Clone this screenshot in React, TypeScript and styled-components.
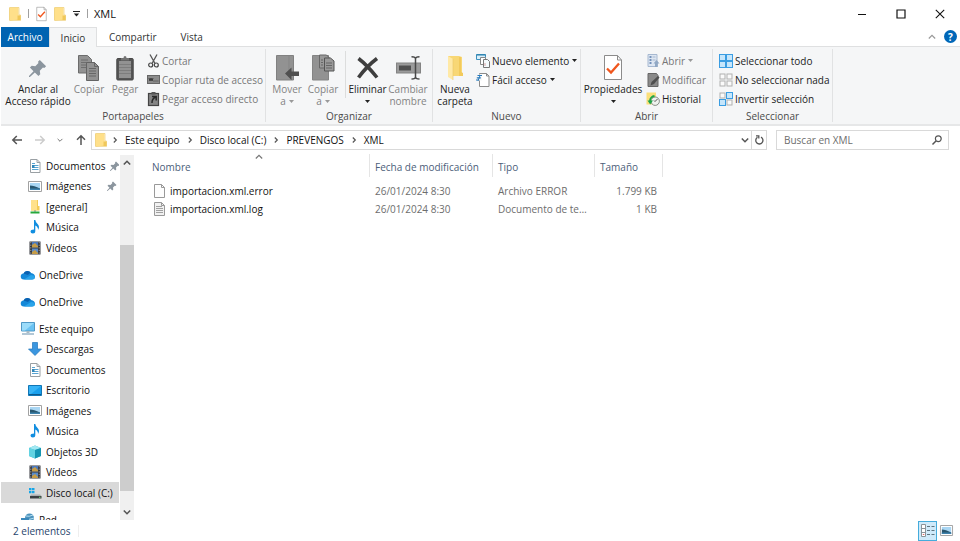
import React from "react";
import styled, { createGlobalStyle } from "styled-components";

const GlobalStyle = createGlobalStyle`
  * { box-sizing: border-box; }
  body { margin: 0; background: #fff; }
  body, button, input { font-family: "Open Sans", "Noto Sans", sans-serif; font-size: 10px; line-height: 12px; color: #222; }
  button { border: 0; background: none; padding: 0; white-space: nowrap; }
  svg { display: block; flex: none; overflow: visible; }
`;

/* ---------- icons ---------- */

const Folder = ({ w = 12, h = 14 }: { w?: number; h?: number }) => (
  <svg width={w} height={h} viewBox="0 0 12 14">
    <path d="M.5 1h8.500v7.500h2.500V13H.5z" fill="#f6d26b" />
    <path d="M1 .5h8.500v12L1 13.500z" fill="#ffe08a" />
    <path d="M8.500 8.500h3V13h-3z" fill="#f0c85a" />
    <path d="M.5.500h9.500v7.500h1.500v5.500H.5z" fill="none" stroke="#ecc763" strokeWidth=".6" />
  </svg>
);

const BigFolder = () => (
  <svg width="16" height="25" viewBox="0 0 16 25">
    <path d="M1 1h11l3 1v19H1z" fill="#f8d775" />
    <path d="M12 2h2v15l2 1v3h-4z" fill="#f2ca5c" />
    <path d="M1 1l5 3v21l-5-3z" fill="#ffe9a6" />
    <path d="M6 4v21" stroke="#e9c666" strokeWidth=".6" />
  </svg>
);

const CheckDoc = ({ w = 11, h = 14 }: { w?: number; h?: number }) => (
  <svg width={w} height={h} viewBox="0 0 18 25">
    <path d="M.5.5h13l4 4.500v19.500H.5z" fill="#fff" stroke="#8b8b8b" />
    <path d="M13.500.5V5h4" fill="none" stroke="#8b8b8b" />
    <path d="M3 13.500l4 4 8-9" fill="none" stroke="#f0561d" strokeWidth="2.300" />
  </svg>
);

const Pin = ({ size = 10 }: { size?: number }) => (
  <svg width={size} height={size} viewBox="0 0 20 20">
    <path d="M12 1l7 7-2 2-1.500-.5-3.500 3.500.5 4-2 2-4-4L1 20l-1 0 0-1 5-5.500L1 9.500l2-2 4 .5L10.500 4.500 10 3z" fill="#8b959e" />
  </svg>
);

const CopyBig = () => (
  <svg width="22" height="26" viewBox="0 0 22 26">
    <path d="M.5.5h9l4 4V18H.5z" fill="#929292" stroke="#6c6c6c" />
    <path d="M3 5h7M3 7.500h8M3 10h8M3 12.500h5" stroke="#646464" strokeWidth=".8" />
    <path d="M8.500 7.500h8l4 4v14h-12z" fill="#929292" stroke="#646464" />
    <path d="M16.500 7.500v4h4M11 13.500h7M11 16h7M11 18.500h7M11 21h7" fill="none" stroke="#5c5c5c" strokeWidth=".8" />
  </svg>
);

const PasteBig = () => (
  <svg width="18" height="26" viewBox="0 0 18 26">
    <rect x=".8" y="3.500" width="16.400" height="21.500" rx="1" fill="#555" stroke="#484848" />
    <path d="M3 6h12v17H3z" fill="#929292" />
    <path d="M5 5.500V3h2.500a1.500 2 0 0 1 3 0H13v2.500z" fill="#737373" />
    <path d="M3 9.500h12M3 12.500h12M3 15.500h12M3 18.500h12" stroke="#777" strokeWidth=".8" />
  </svg>
);

const Scissors = () => (
  <svg width="11" height="14" viewBox="0 0 11 14">
    <path d="M2 .5l5 9M9 .5l-5 9" stroke="#555" strokeWidth="1.300" />
    <circle cx="2.700" cy="11" r="2" fill="none" stroke="#444" strokeWidth="1.200" />
    <circle cx="8.300" cy="11" r="2" fill="none" stroke="#444" strokeWidth="1.200" />
  </svg>
);

const PathIcon = () => (
  <svg width="13" height="9" viewBox="0 0 13 9">
    <rect x=".5" y=".5" width="12" height="8" fill="#8b8b8b" stroke="#666" />
    <path d="M2 3l1 3 1-3 1 3 1-3M6.500 6h1M8.500 6h1M10.500 6h.8" stroke="#333" strokeWidth=".9" fill="none" />
  </svg>
);

const PasteLink = () => (
  <svg width="11" height="14" viewBox="0 0 11 14">
    <rect x=".5" y="1.500" width="10" height="12" fill="#858585" stroke="#444" strokeWidth="1.200" />
    <path d="M3.500 0h4v2.500h-4z" fill="#555" />
    <path d="M4 4.500h4.200v4M8 4.700Q3.800 6.500 4 11" fill="none" stroke="#292929" strokeWidth="1.500" />
  </svg>
);

const MoveBig = () => (
  <svg width="23" height="26" viewBox="0 0 23 26">
    <path d="M.5.500h17V25H.5z" fill="#929292" stroke="#818181" />
    <path d="M13 1v15" stroke="#858585" />
    <path d="M9 18.500l6.500-6v4H23V21h-7.500v4z" fill="#505050" />
  </svg>
);

const CopyToBig = () => (
  <svg width="23" height="27" viewBox="0 0 23 27">
    <path d="M.5 1.500h16V26H.5z" fill="#929292" stroke="#848484" />
    <path d="M7.500 1h7l3 3v10h-10z" fill="#999" stroke="#666" />
    <path d="M12.500 4h6l3.500 3v10h-9.500z" fill="#999" stroke="#555" />
    <path d="M14 9h6M14 11.500h6M14 14h6M9 6h2M9 8.500h2M9 11h2" stroke="#606060" strokeWidth=".9" />
  </svg>
);

const DeleteBig = () => (
  <svg width="22" height="22" viewBox="0 0 22 22">
    <path d="M1.500 1.500Q10 8 20 20.500M20 1.500Q10 9 1.500 20.500" fill="none" stroke="#3e3e3e" strokeWidth="3.600" />
  </svg>
);

const RenameBig = () => (
  <svg width="25" height="24" viewBox="0 0 25 24">
    <rect x=".5" y="7" width="24" height="10" fill="#9b9b9b" stroke="#838383" />
    <path d="M3 9.500h12v5H3z" fill="#505050" />
    <path d="M15.500.8Q19.500.8 19.500 3v18q0 2-4 2M23.500.8Q19.500.8 19.500 3v18q0 2 4 2" fill="none" stroke="#484848" strokeWidth="1.500" />
  </svg>
);

const NewItem = () => (
  <svg width="14" height="14" viewBox="0 0 14 14">
    <path d="M.5.5h9v5h-9z" fill="#d9f0fb" stroke="#3c91be" />
    <path d="M.5 1h9" stroke="#277aa8" />
    <path d="M4.500 3.500h5v7h-5z" fill="#fff" stroke="#888" />
    <path d="M7.500 5.500h4l2 2v6h-6z" fill="#f4fafd" stroke="#777" />
    <path d="M9 9v3" stroke="#d7a3a3" />
  </svg>
);

const EasyAccess = () => (
  <svg width="14" height="14" viewBox="0 0 14 14">
    <path d="M3.500.5h7l2.500 2.500v10.500H3.500z" fill="#fff" stroke="#8b8b8b" />
    <path d="M10.500.5V3H13" fill="none" stroke="#8b8b8b" />
    <path d="M0 1.500h6v6H0z" fill="#f5f6f7" />
    <path d="M1.500 2.500h4.500M.8 4.800h4M0 7h2.500" stroke="#2779ba" strokeWidth="1.200" />
    <path d="M4 2.500L2 8" stroke="#2779ba" strokeWidth="1" />
  </svg>
);

const OpenIcon = () => (
  <svg width="13" height="14" viewBox="0 0 13 14">
    <path d="M1 .5h9v12H1z" fill="#dde6f2" stroke="#a6b8d0" />
    <path d="M2.500 3h2M2.500 6h2M2.500 9h2" stroke="#5277a8" strokeWidth="1.300" />
    <path d="M5.500 3h3M5.500 6h3" stroke="#a5b7ce" />
    <path d="M9.500 6l3 3.500h-1.700V13H8V9.500H6.500z" fill="#91a8c4" />
  </svg>
);

const EditIcon = () => (
  <svg width="13" height="14" viewBox="0 0 13 14">
    <path d="M1 .5h8.500l1.500 2v11H1z" fill="#8a8a8a" stroke="#666" />
    <path d="M3.500 12.500l1-3.500L11 3l1.500 1.500L7 11z" fill="#4f4f4f" />
  </svg>
);

const HistoryIcon = () => (
  <svg width="14" height="14" viewBox="0 0 14 14">
    <path d="M.5.5h9.500v12H.5z" fill="#fbdf7a" />
    <circle cx="9.200" cy="9.200" r="4.200" fill="#eef2ee" stroke="#838b84" />
    <path d="M4 9a5 5 0 0 1 4.500-5" fill="none" stroke="#1ea548" strokeWidth="1.800" />
    <path d="M1.500 8.500h5.500L4.200 12.500z" fill="#1ea548" />
    <path d="M11.500 7L9 9.500 8 8.500" stroke="#555" fill="none" />
  </svg>
);

const Squares = ({ on }: { on: boolean[] }) => (
  <svg width="14" height="14" viewBox="0 0 14 14">
    {on.map((sel, i) => (
      <rect
        key={i}
        x={(i % 2) * 7 + (sel ? 0.5 : 1)}
        y={Math.floor(i / 2) * 7 + (sel ? 0.5 : 1)}
        width={sel ? 6 : 5}
        height={sel ? 6 : 5}
        fill={sel ? "#c6e6fb" : "#fafafa"}
        stroke={sel ? "#3a9de2" : "#b0b0b0"}
      />
    ))}
  </svg>
);

const Chevron = ({ d, w = 8, color = "#555", sw = 1.2 }: { d: "up" | "down" | "right"; w?: number; color?: string; sw?: number }) => (
  <svg width={w} height={w} viewBox="0 0 8 8">
    <path
      d={d === "up" ? "M.8 5.500L4 2.300l3.200 3.200" : d === "down" ? "M.8 2.500L4 5.700l3.200-3.200" : "M2.800 1.500L5.300 4 2.800 6.500"}
      fill="none" stroke={color} strokeWidth={sw}
    />
  </svg>
);

const Triangle = ({ color = "#222" }: { color?: string }) => (
  <svg width="5" height="3" viewBox="0 0 5 3"><path d="M0 0h5L2.500 3z" fill={color} /></svg>
);

const Arrow = ({ dir, color }: { dir: number; color: string }) => (
  <svg width="10" height="10" viewBox="0 0 10 10">
    <path transform={`rotate(${dir} 5 5)`} d="M10 5H1M4.800 1L.8 5l4 4" fill="none" stroke={color} strokeWidth="1.500" />
  </svg>
);

const DocIcon = () => (
  <svg width="14" height="14" viewBox="0 0 14 14">
    <path d="M2.500.5H9l3 3v10H2.500z" fill="#fff" stroke="#9aa0a4" />
    <path d="M9 .5v3h3" fill="none" stroke="#9aa0a4" />
    <path d="M4 4.500h3M4 6.500h6.500M4 8.500h6.500M4 10.500h6.500" stroke="#5aa5d2" />
    <path d="M4 6h2.500v3H4z" fill="#2f85b8" />
  </svg>
);

const ImageIcon = ({ w = 14 }: { w?: number }) => (
  <svg width={w} height="11" viewBox="0 0 14 11" preserveAspectRatio="none">
    <path d="M.5.5h13v10H.5z" fill="#fff" stroke="#a2a2a2" />
    <path d="M2 2h10v7H2z" fill="#a9d6f3" />
    <path d="M2 4.500q4 0 10 3V9H2z" fill="#28566f" />
    <path d="M2 7.500h10V9H2z" fill="#3d82ad" />
  </svg>
);

const NetFolder = () => (
  <svg width="14" height="15" viewBox="0 0 14 15">
    <path d="M3 1h7v6h1.500v4.500H3z" fill="#f3cb56" />
    <path d="M3 1h6v10.500H3z" fill="#ffe18b" />
    <path d="M7 11v2" stroke="#888" />
    <path d="M2.500 13.500h9" stroke="#27a83a" strokeWidth="2" />
  </svg>
);

const MusicIcon = () => (
  <svg width="14" height="14" viewBox="0 0 14 14">
    <path d="M6 0h1.300Q7.500 2.500 10 4.500q2 2.500 0 5.500 .3-3-2.700-4.500V11q0 2.500-2.500 2.500Q2.500 13.500 2.500 11.500T6 9.500z" fill="#118ee0" />
  </svg>
);

const VideoIcon = () => (
  <svg width="14" height="14" viewBox="0 0 14 14">
    <path d="M1.500.5h11v13h-11z" fill="#34373c" />
    <path d="M4 1h6v5.500H4z" fill="#4b79bd" />
    <path d="M4 7.500h6V13H4z" fill="#5b8cc9" />
    <path d="M4 4l3-2 3 3v1.500H4zM4 11l3-2 3 3v1H4z" fill="#c69c46" />
    <path d="M2.800 1v12M11.200 1v12" stroke="#bdbdbd" strokeWidth=".8" strokeDasharray="1.300 1.300" />
  </svg>
);

const CloudIcon = () => (
  <svg width="14" height="10" viewBox="0 0 14 10">
    <path d="M3 9.500a3 3 0 0 1-.5-6A4.300 4.300 0 0 1 10 3q3.800.5 4 3.500 0 3-3 3z" fill="#1488d8" />
    <path d="M2.500 3.500A4.300 4.300 0 0 1 10 3q-2 0-3 2z" fill="#0b61b0" />
    <path d="M3 9.500L10 5q3 0 4 2-.2 2.500-3 2.500z" fill="#29a4ea" />
  </svg>
);

const ComputerIcon = () => (
  <svg width="14" height="13" viewBox="0 0 14 13">
    <path d="M.5.5h13v8.500H.5z" fill="#6bc3f3" stroke="#5099c7" />
    <path d="M1 1h12L4 8.500H1z" fill="#9bdcfa" />
    <path d="M7 9v2" stroke="#a9bac5" strokeWidth="3" />
    <path d="M1 12h12" stroke="#7fa2bb" strokeWidth="1.200" />
  </svg>
);

const DownloadIcon = () => (
  <svg width="14" height="14" viewBox="0 0 14 14">
    <path d="M4.500.5h5V7h4L7 13.500.5 7h4z" fill="#3b96df" stroke="#2177bd" strokeWidth=".7" />
  </svg>
);

const DesktopIcon = () => (
  <svg width="14" height="11" viewBox="0 0 14 11">
    <path d="M.5.500h13v10H.5z" fill="#19a0ed" stroke="#1176b5" />
    <path d="M1 1h12L3 9H1z" fill="#38b4f6" />
    <path d="M1 9.500h12" stroke="#0b5b90" />
  </svg>
);

const CubeIcon = () => (
  <svg width="14" height="14" viewBox="0 0 14 14">
    <path d="M1 3l6-2.500L13 3v8l-6 2.500L1 11z" fill="#35b8cf" />
    <path d="M1 3l6-2.500L13 3 7 5z" fill="#a2e8f2" />
    <path d="M7 5l6-2v8l-6 2.500z" fill="#1595b1" />
    <path d="M1 3l6 2v8.500L1 11z" fill="#62d3e2" />
  </svg>
);

const DriveIcon = () => (
  <svg width="14" height="12" viewBox="0 0 14 12">
    <path d="M1 1h2.500v2.300H1zM4 1h2.500v2.300H4zM1 4h2.500v2.300H1zM4 4h2.500v2.300H4z" fill="#16a6e8" />
    <path d="M3 7.500h9l1.500 1.500H2z" fill="#a9adb0" />
    <path d="M2 9h11.500v2.500H2z" fill="#3c4043" />
    <path d="M11 10.300h1.500" stroke="#75dd79" />
  </svg>
);

const NetworkIcon = () => (
  <svg width="14" height="13" viewBox="0 0 14 13">
    <circle cx="8.500" cy="5" r="4.500" fill="#4d93bd" />
    <path d="M5 3q3 1 7-1M4 6q5 1 9-1" stroke="#b5dff2" fill="none" />
    <path d="M0 5h8v5H0z" fill="#3a88bb" />
  </svg>
);

const FileIcon = ({ lines }: { lines?: boolean }) => (
  <svg width="11" height="14" viewBox="0 0 11 14">
    <path d="M.5.5h7l3 3v10H.5z" fill={lines ? "#f1f1f1" : "#fdfdfd"} stroke="#999" />
    <path d="M7.500.5v3h3" fill="none" stroke="#999" />
    {lines && <path d="M2 4.500h6M2 6.500h7M2 8.500h7M2 10.500h7" stroke="#8d8d8d" strokeWidth=".8" />}
  </svg>
);

/* ---------- window frame ---------- */

const Window = styled.div`
  height: 100vh;
  display: flex;
  flex-direction: column;
  overflow: hidden;
  padding-left: 1px;
`;

const TitleBar = styled.header`
  height: 27px;
  flex: none;
  display: flex;
  align-items: center;
  padding: 0 15px 0 8px;
`;

const QuickAccess = styled.div`
  display: flex;
  align-items: center;
  gap: 7px;
`;

const Separator = styled.span`
  width: 1px;
  height: 9px;
  background: #a0a0a0;
`;

const Title = styled.h1`
  margin: 0 auto 0 6px;
  font-size: 11px;
  font-weight: 400;
  color: #111;
`;

const WindowButtons = styled.div`
  display: flex;
  gap: 29px;
`;

const TabStrip = styled.div`
  height: 20px;
  flex: none;
  display: flex;
  border-bottom: 1px solid #dfe0e1;
  padding-right: 3px;
`;

const Tab = styled.button<{ $kind?: "file" | "active" }>`
  height: 20px;
  padding: 0 12px;
  color: ${(p) => (p.$kind === "file" ? "#fff" : "#333")};
  ${(p) => p.$kind === "file" && "background: #0063b1; width: 48px; padding: 0;"}
  ${(p) => p.$kind === "active" && "background: #f5f6f7; width: 48px; padding: 0; border: 1px solid #dfe0e1; border-bottom: 0;"}
`;

const TabTools = styled.div`
  margin-left: auto;
  display: flex;
  align-items: center;
  gap: 8px;
`;

const Help = styled.button`
  width: 13px;
  height: 13px;
  border-radius: 50%;
  background: #0067b8;
  color: #fff;
  font-weight: 700;
`;

/* ---------- ribbon ---------- */

const Ribbon = styled.section`
  height: 79px;
  flex: none;
  display: grid;
  grid-template-columns: 265px 167px 148px 132px 120px;
  background: #f5f6f7;
  border-bottom: 2px solid #e6e7e8;
`;

const Group = styled.div`
  display: flex;
  flex-direction: column;
  margin: 2px 0;
  border-right: 1px solid #e1e2e3;
`;

const GroupBody = styled.div<{ $inset: number }>`
  flex: 1;
  display: flex;
  padding-left: ${(p) => p.$inset}px;
`;

const GroupLabel = styled.div`
  height: 12px;
  text-align: center;
  color: #4a4a4a;
`;

const Large = styled.button<{ $w: number; $muted?: boolean }>`
  width: ${(p) => p.$w}px;
  display: flex;
  flex-direction: column;
  align-items: center;
  justify-content: flex-start;
  padding-top: 3px;
  color: ${(p) => (p.$muted ? "#838383" : "#222")};
`;

const LargeIcon = styled.span`
  height: 31px;
  flex: none;
  display: flex;
  align-items: center;
`;

const LargeText = styled.span`
  white-space: nowrap;
`;

const Line = styled.span`
  display: flex;
  justify-content: center;
  align-items: center;
  gap: 3px;
  min-height: 12px;
`;

const SmallStack = styled.div<{ $gap?: number }>`
  display: flex;
  flex-direction: column;
  margin-left: ${(p) => p.$gap ?? 0}px;
  padding-top: 2px;
`;

const Small = styled.button<{ $muted?: boolean }>`
  height: 19px;
  display: flex;
  align-items: center;
  gap: 2px;
  color: ${(p) => (p.$muted ? "#777" : "#222")};
  & > svg:last-child { margin-left: 1px; }
`;

const SmallIcon = styled.span`
  width: 14px;
  display: flex;
  justify-content: center;
`;

const Rule = styled.span`
  width: 1px;
  height: 47px;
  margin: 2px 0 0 4px;
  background: #dcdddd;
`;

type LargeProps = { w: number; icon: React.ReactNode; lines: string[]; muted?: boolean; menu?: boolean };

const LargeButton = ({ w, icon, lines, muted, menu }: LargeProps) => (
  <Large $w={w} $muted={muted}>
    <LargeIcon>{icon}</LargeIcon>
    <LargeText>
      {lines.map((l, i) => (
        <Line key={i}>
          {l}
          {menu && i === lines.length - 1 && <Triangle color={muted ? "#999" : "#222"} />}
        </Line>
      ))}
    </LargeText>
  </Large>
);

type SmallProps = { icon: React.ReactNode; text: string; muted?: boolean; menu?: boolean };

const SmallButton = ({ icon, text, muted, menu }: SmallProps) => (
  <Small $muted={muted}>
    <SmallIcon>{icon}</SmallIcon>
    {text}
    {menu && <Triangle color={muted ? "#999" : "#222"} />}
  </Small>
);

/* ---------- address row ---------- */

const AddressRow = styled.div`
  height: 28px;
  flex: none;
  display: flex;
  align-items: center;
  padding: 0 11px 0 11px;
`;

const History = styled.div`
  display: flex;
  align-items: center;
  width: 79px;
  padding-right: 5px;
  justify-content: space-between;
`;

const AddressBox = styled.nav`
  flex: 1;
  height: 20px;
  display: flex;
  align-items: center;
  border: 1px solid #d9d9d9;
  padding-left: 3px;
`;

const Crumbs = styled.div`
  display: flex;
  align-items: center;
  margin: 0 auto 0 4px;
`;

const Crumb = styled.button`
  margin: 0 6px;
  color: #111;
`;

const Refresh = styled.button`
  width: 15px;
  height: 18px;
  display: grid;
  place-items: center;
  border-left: 1px solid #d9d9d9;
  margin-left: 2px;
`;

const SearchBox = styled.label`
  width: 173px;
  height: 20px;
  margin-left: 9px;
  display: flex;
  align-items: center;
  border: 1px solid #d9d9d9;
  padding: 0 6px 0 7px;
`;

const SearchInput = styled.input`
  flex: 1;
  min-width: 0;
  border: 0;
  padding: 0;
  outline: 0;
  background: none;
  &::placeholder { color: #6d6d6d; opacity: 1; }
`;

/* ---------- body ---------- */

const Body = styled.div`
  flex: 1;
  min-height: 0;
  display: flex;
`;

const Sidebar = styled.nav`
  width: 118px;
  flex: none;
  overflow: hidden;
  padding-top: 1px;
`;

const Tree = styled.ul`
  list-style: none;
  margin: 0 0 6px;
  padding: 0;
`;

const Node = styled.li`
  height: 20px;
  &:nth-child(odd) { height: 21px; }
`;

const NodeLink = styled.a<{ $root?: boolean; $selected?: boolean }>`
  height: 100%;
  display: flex;
  align-items: center;
  gap: 4px;
  padding: 0 2px 0 ${(p) => (p.$root ? 20 : 27)}px;
  white-space: nowrap;
  text-decoration: none;
  color: #111;
  background: ${(p) => (p.$selected ? "#d9d9d9" : "transparent")};
  & > svg:nth-of-type(2) { margin-left: auto; }
`;

const Scrollbar = styled.div`
  width: 14px;
  flex: none;
  display: flex;
  flex-direction: column;
  margin: 1px 0 0 1px;
  background: #f0f0f0;
`;

const ScrollButton = styled.button`
  height: 16px;
  display: grid;
  place-items: center;
`;

const ScrollSpace = styled.div<{ $grow: number; $thumb?: boolean }>`
  flex: ${(p) => p.$grow};
  background: ${(p) => (p.$thumb ? "#cdcdcd" : "transparent")};
`;

const Files = styled.main`
  flex: 1;
  min-width: 0;
  padding-left: 12px;
`;

const FileTable = styled.table`
  table-layout: fixed;
  width: 517px;
  border-collapse: separate;
  border-spacing: 0;
`;

const Col = styled.col<{ $w: number }>`
  width: ${(p) => p.$w}px;
`;

const Th = styled.th`
  position: relative;
  height: 23px;
  padding: 2px 5px 0;
  text-align: left;
  font-weight: 400;
  color: #4c607a;
  border-right: 1px solid #e5e5e5;
  &:first-child { padding-left: 6px; }
`;

const SortMark = styled.span`
  position: absolute;
  top: -1px;
  right: 106px;
`;

const Tr = styled.tr`
  &:first-child td { padding-top: 5px; height: 23px; }
`;

const Td = styled.td<{ $right?: boolean }>`
  height: 18px;
  padding: 0 6px 0 5px;
  overflow: hidden;
  text-overflow: ellipsis;
  white-space: nowrap;
  color: #6d6d6d;
  text-align: ${(p) => (p.$right ? "right" : "left")};
`;

const FileName = styled.span`
  display: flex;
  align-items: center;
  gap: 5px;
  padding-left: 3px;
  color: #111;
`;

const StatusBar = styled.footer`
  height: 21px;
  flex: none;
  display: flex;
  align-items: center;
  padding: 0 7px 0 12px;
  color: #26436b;
`;

const StatusRule = styled.span`
  width: 1px;
  height: 12px;
  margin-left: 8px;
  background: #eee;
`;

const ViewButtons = styled.div`
  margin-left: auto;
  display: flex;
  align-items: center;
  gap: 3px;
`;

const ViewButton = styled.button<{ $active?: boolean }>`
  height: 20px;
  width: ${(p) => (p.$active ? 19 : 13)}px;
  display: grid;
  place-items: center;
  ${(p) => p.$active && "background: #cfeafa; border: 1px solid #45acdc;"}
`;

type Item = { text: string; icon: React.ReactNode; root?: boolean; pinned?: boolean; selected?: boolean };

const tree: Item[][] = [
  [
    { text: "Documentos", icon: <DocIcon />, pinned: true },
    { text: "Imágenes", icon: <ImageIcon />, pinned: true },
    { text: "[general]", icon: <NetFolder /> },
    { text: "Música", icon: <MusicIcon /> },
    { text: "Vídeos", icon: <VideoIcon /> },
  ],
  [{ text: "OneDrive", icon: <CloudIcon />, root: true }],
  [{ text: "OneDrive", icon: <CloudIcon />, root: true }],
  [
    { text: "Este equipo", icon: <ComputerIcon />, root: true },
    { text: "Descargas", icon: <DownloadIcon /> },
    { text: "Documentos", icon: <DocIcon /> },
    { text: "Escritorio", icon: <DesktopIcon /> },
    { text: "Imágenes", icon: <ImageIcon /> },
    { text: "Música", icon: <MusicIcon /> },
    { text: "Objetos 3D", icon: <CubeIcon /> },
    { text: "Vídeos", icon: <VideoIcon /> },
    { text: "Disco local (C:)", icon: <DriveIcon />, selected: true },
  ],
  [{ text: "Red", icon: <NetworkIcon />, root: true }],
];

const files = [
  { name: "importacion.xml.error", date: "26/01/2024 8:30", type: "Archivo ERROR", size: "1.799 KB", lines: false },
  { name: "importacion.xml.log", date: "26/01/2024 8:30", type: "Documento de texto", size: "1 KB", lines: true },
];

const path = ["Este equipo", "Disco local (C:)", "PREVENGOS", "XML"];

export default function App() {
  return (
    <Window>
      <GlobalStyle />
      <TitleBar>
        <QuickAccess>
          <Folder />
          <Separator />
          <CheckDoc />
          <Folder />
          <svg width="7" height="6" viewBox="0 0 7 6"><path d="M0 .500h7" stroke="#222" /><path d="M.8 2.500h5.400L3.500 5.500z" fill="#222" /></svg>
          <Separator />
        </QuickAccess>
        <Title>XML</Title>
        <WindowButtons>
          <button aria-label="Minimizar"><svg width="10" height="10" viewBox="0 0 10 10"><path d="M1 5.500h8" stroke="#111" /></svg></button>
          <button aria-label="Maximizar"><svg width="10" height="10" viewBox="0 0 10 10"><path d="M1 1h8v8H1z" fill="none" stroke="#111" strokeWidth="1.200" /></svg></button>
          <button aria-label="Cerrar"><svg width="10" height="10" viewBox="0 0 10 10"><path d="M.8.8l8.400 8.400M9.200.8L.8 9.200" stroke="#111" strokeWidth="1.100" /></svg></button>
        </WindowButtons>
      </TitleBar>

      <TabStrip>
        <Tab $kind="file">Archivo</Tab>
        <Tab $kind="active">Inicio</Tab>
        <Tab>Compartir</Tab>
        <Tab>Vista</Tab>
        <TabTools>
          <Chevron d="up" color="#999" />
          <Help aria-label="Ayuda">?</Help>
        </TabTools>
      </TabStrip>

      <Ribbon>
        <Group>
          <GroupBody $inset={1}>
            <LargeButton w={72} icon={<Pin size={18} />} lines={["Anclar al", "Acceso rápido"]} />
            <LargeButton w={30} icon={<CopyBig />} lines={["Copiar"]} muted />
            <LargeButton w={42} icon={<PasteBig />} lines={["Pegar"]} muted />
            <SmallStack>
              <SmallButton icon={<Scissors />} text="Cortar" muted />
              <SmallButton icon={<PathIcon />} text="Copiar ruta de acceso" muted />
              <SmallButton icon={<PasteLink />} text="Pegar acceso directo" muted />
            </SmallStack>
          </GroupBody>
          <GroupLabel>Portapapeles</GroupLabel>
        </Group>
        <Group>
          <GroupBody $inset={3}>
            <LargeButton w={36} icon={<MoveBig />} lines={["Mover", "a"]} muted menu />
            <LargeButton w={36} icon={<CopyToBig />} lines={["Copiar", "a"]} muted menu />
            <Rule />
            <LargeButton w={43} icon={<DeleteBig />} lines={["Eliminar", ""]} menu />
            <LargeButton w={38} icon={<RenameBig />} lines={["Cambiar", "nombre"]} muted />
          </GroupBody>
          <GroupLabel>Organizar</GroupLabel>
        </Group>
        <Group>
          <GroupBody $inset={1}>
            <LargeButton w={42} icon={<BigFolder />} lines={["Nueva", "carpeta"]} />
            <SmallStack>
              <SmallButton icon={<NewItem />} text="Nuevo elemento" menu />
              <SmallButton icon={<EasyAccess />} text="Fácil acceso" menu />
            </SmallStack>
          </GroupBody>
          <GroupLabel>Nuevo</GroupLabel>
        </Group>
        <Group>
          <GroupBody $inset={1}>
            <LargeButton w={62} icon={<CheckDoc w={18} h={25} />} lines={["Propiedades", ""]} menu />
            <SmallStack $gap={2}>
              <SmallButton icon={<OpenIcon />} text="Abrir" muted menu />
              <SmallButton icon={<EditIcon />} text="Modificar" muted />
              <SmallButton icon={<HistoryIcon />} text="Historial" />
            </SmallStack>
          </GroupBody>
          <GroupLabel>Abrir</GroupLabel>
        </Group>
        <Group>
          <GroupBody $inset={6}>
            <SmallStack>
              <SmallButton icon={<Squares on={[true, true, true, true]} />} text="Seleccionar todo" />
              <SmallButton icon={<Squares on={[false, false, false, false]} />} text="No seleccionar nada" />
              <SmallButton icon={<Squares on={[false, true, true, false]} />} text="Invertir selección" />
            </SmallStack>
          </GroupBody>
          <GroupLabel>Seleccionar</GroupLabel>
        </Group>
      </Ribbon>

      <AddressRow>
        <History>
          <button aria-label="Atrás"><Arrow dir={0} color="#555" /></button>
          <button aria-label="Adelante"><Arrow dir={180} color="#ccc" /></button>
          <button aria-label="Recientes"><Chevron d="down" w={6} color="#666" /></button>
          <button aria-label="Subir"><Arrow dir={90} color="#555" /></button>
        </History>
        <AddressBox aria-label="Ruta">
          <Folder />
          <Crumbs>
            {path.map((p) => (
              <React.Fragment key={p}>
                <Chevron d="right" />
                <Crumb>{p}</Crumb>
              </React.Fragment>
            ))}
          </Crumbs>
          <button aria-label="Ubicaciones anteriores"><Chevron d="down" sw={1.5} /></button>
          <Refresh aria-label="Actualizar">
            <svg width="9" height="10" viewBox="0 0 9 10"><path d="M6 2.200A3.600 3.600 0 1 1 2.500 2.300M1 .8h2.800v2.800" fill="none" stroke="#555" strokeWidth="1.300" /></svg>
          </Refresh>
        </AddressBox>
        <SearchBox>
          <SearchInput placeholder="Buscar en XML" aria-label="Buscar en XML" />
          <svg width="10" height="10" viewBox="0 0 10 10"><circle cx="6.300" cy="3.700" r="2.900" fill="none" stroke="#555" strokeWidth="1.200" /><path d="M4.200 5.800L.5 9.500" stroke="#555" strokeWidth="1.500" /></svg>
        </SearchBox>
      </AddressRow>

      <Body>
        <Sidebar aria-label="Panel de navegación">
          {tree.map((group, g) => (
            <Tree key={g}>
              {group.map((n) => (
                <Node key={n.text}>
                  <NodeLink href="#" $root={n.root} $selected={n.selected}>
                    {n.icon}
                    {n.text}
                    {n.pinned && <Pin />}
                  </NodeLink>
                </Node>
              ))}
            </Tree>
          ))}
        </Sidebar>
        <Scrollbar>
          <ScrollButton aria-label="Arriba"><Chevron d="up" sw={1.6} /></ScrollButton>
          <ScrollSpace $grow={74} />
          <ScrollSpace $grow={246} $thumb />
          <ScrollSpace $grow={13} />
          <ScrollButton aria-label="Abajo"><Chevron d="down" sw={1.6} /></ScrollButton>
        </Scrollbar>
        <Files>
          <FileTable>
            <colgroup>
              <Col $w={224} />
              <Col $w={123} />
              <Col $w={102} />
              <Col $w={68} />
            </colgroup>
            <thead>
              <tr>
                <Th>Nombre<SortMark><Chevron d="up" color="#777" /></SortMark></Th>
                <Th>Fecha de modificación</Th>
                <Th>Tipo</Th>
                <Th>Tamaño</Th>
              </tr>
            </thead>
            <tbody>
              {files.map((f) => (
                <Tr key={f.name}>
                  <Td><FileName><FileIcon lines={f.lines} />{f.name}</FileName></Td>
                  <Td>{f.date}</Td>
                  <Td>{f.type}</Td>
                  <Td $right>{f.size}</Td>
                </Tr>
              ))}
            </tbody>
          </FileTable>
        </Files>
      </Body>

      <StatusBar>
        2 elementos
        <StatusRule />
        <ViewButtons>
          <ViewButton $active aria-label="Detalles">
            <svg width="14" height="13" viewBox="0 0 14 13">
              <path d="M.5.500h4v12h-4zM.5 4.500h4M.5 8.500h4" fill="#fff" stroke="#8a9399" />
              <path d="M6 2.500h3M10.500 2.500h3M6 6.500h3M10.500 6.500h3M6 10.500h3M10.500 10.500h3" stroke="#5e7480" />
              <path d="M1.800 10.500h1.500" stroke="#d66" />
            </svg>
          </ViewButton>
          <ViewButton aria-label="Iconos grandes"><ImageIcon w={13} /></ViewButton>
        </ViewButtons>
      </StatusBar>
    </Window>
  );
}
